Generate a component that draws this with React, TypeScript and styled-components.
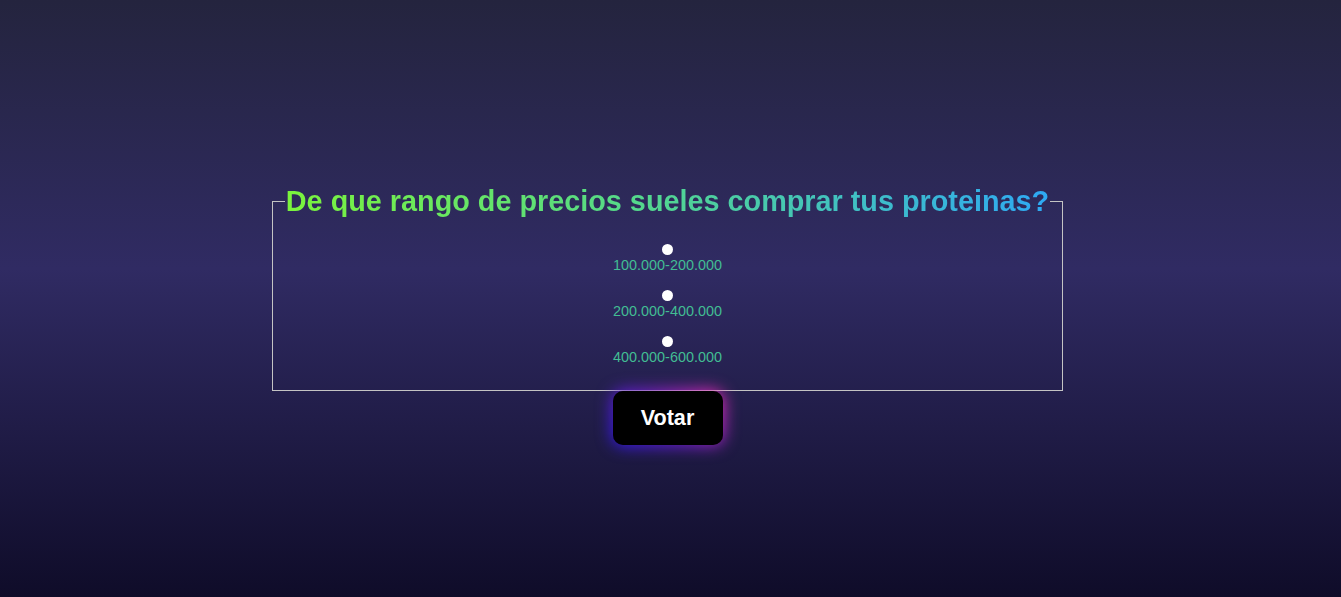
import styled, { createGlobalStyle } from "styled-components";

const GlobalStyle = createGlobalStyle`
  html, body {
    margin: 0;
    padding: 0;
    height: 100%;
  }
  body {
    font-family: "Liberation Sans", Arial, sans-serif;
    background: linear-gradient(to bottom, #24243e 0%, #302b63 45%, #0f0c29 100%);
    min-height: 597px;
  }
`;

const Page = styled.main`
  display: flex;
  flex-direction: column;
  align-items: center;
  padding: 184px 6px 0 0;
  min-height: 597px;
  box-sizing: border-box;
`;

const Form = styled.form`
  display: flex;
  flex-direction: column;
  align-items: center;
`;

const Fieldset = styled.fieldset`
  width: 790px;
  box-sizing: border-box;
  margin: 0;
  padding: 6px 12px 25px;
  border: 1px solid #c4c4c4;
  display: flex;
  flex-direction: column;
  align-items: center;
  gap: 14px;
`;

const Legend = styled.legend`
  padding: 0 1px;
  font-size: 28.8px;
  font-weight: 700;
  line-height: 34px;
  white-space: nowrap;
  background: linear-gradient(90deg, #7bf43c 0%, #55d98a 45%, #2ea9f5 100%);
  -webkit-background-clip: text;
  background-clip: text;
  color: transparent;
`;

const Option = styled.div`
  display: flex;
  flex-direction: column;
  align-items: center;
  &:first-of-type {
    margin-top: 17px;
  }
`;

const Radio = styled.input`
  appearance: none;
  margin: 3px 0 2px;
  width: 11px;
  height: 11px;
  border-radius: 50%;
  background: #ffffff;
  border: none;
  cursor: pointer;
  &:checked {
    box-shadow: inset 0 0 0 3px #2ea9f5;
  }
`;

const Label = styled.label`
  font-size: 14.4px;
  line-height: 16px;
  color: #42bd93;
  cursor: pointer;
`;

const VoteButton = styled.button`
  position: relative;
  width: 110px;
  height: 54px;
  border: none;
  border-radius: 10px;
  background: #000000;
  color: #ffffff;
  font-family: "Liberation Sans", Arial, sans-serif;
  font-size: 21.6px;
  font-weight: 700;
  cursor: pointer;
  isolation: isolate;
  &::before {
    content: "";
    position: absolute;
    inset: -1px;
    border-radius: 12px;
    background: linear-gradient(45deg, #2a16ff 0%, #7a1fd0 50%, #ff2fb8 100%);
    filter: blur(8px);
    z-index: -1;
  }
  &::after {
    content: "";
    position: absolute;
    inset: 0;
    border-radius: 10px;
    background: #000000;
    z-index: -1;
  }
`;

const options = ["100.000-200.000", "200.000-400.000", "400.000-600.000"];

export default function App() {
  return (
    <>
      <GlobalStyle />
      <Page>
        <Form onSubmit={(e) => e.preventDefault()}>
          <Fieldset>
            <Legend>De que rango de precios sueles comprar tus proteinas?</Legend>
            {options.map((o, i) => (
              <Option key={o}>
                <Radio type="radio" name="rango" id={`r${i}`} value={o} />
                <Label htmlFor={`r${i}`}>{o}</Label>
              </Option>
            ))}
          </Fieldset>
          <VoteButton type="submit">Votar</VoteButton>
        </Form>
      </Page>
    </>
  );
}
